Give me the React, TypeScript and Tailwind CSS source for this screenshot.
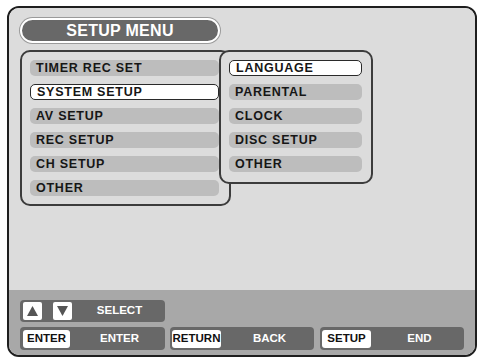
import React from "react";

const font = { fontFamily: '"Liberation Sans", Arial, Helvetica, sans-serif' };

function Item({ label, selected, w }: { label: string; selected?: boolean; w: string }) {
  return (
    <div
      className={`${w} h-[16px] rounded-[5px] flex items-center pl-[6px] text-[12.5px] font-bold tracking-[0.75px] leading-none text-[#161616] ${
        selected ? "bg-white border-[1.5px] border-[#2a2a2a] pl-[5px]" : "bg-[#bdbdbd]"
      }`}
    >
      {label}
    </div>
  );
}

function Key({ children, w }: { children: React.ReactNode; w: string }) {
  return (
    <div className={`${w} h-[18px] bg-white rounded-[3px] flex items-center justify-center text-[11.5px] font-bold text-[#111] leading-none`}>
      {children}
    </div>
  );
}

export default function App() {
  const left = ["TIMER REC SET", "SYSTEM SETUP", "AV SETUP", "REC SETUP", "CH SETUP", "OTHER"];
  const right = ["LANGUAGE", "PARENTAL", "CLOCK", "DISC SETUP", "OTHER"];
  return (
    <div className="w-[479px] h-[359px] bg-white pt-[6px] pl-[7px]" style={font}>
      <div className="w-[470px] h-[351px] border-2 border-[#1e1e1e] rounded-[12px] overflow-hidden flex flex-col">
        <div className="h-[282px] bg-[#dcdcdc] pl-[11px] pt-[10px]">
          <div className="w-[200px] h-[25px] rounded-full border-2 border-white bg-[#686868] flex items-center justify-center text-white text-[16px] font-bold tracking-[0.3px] leading-none shadow-[0_0_0_1px_#9a9a9a]">
            SETUP MENU
          </div>
          <div className="relative mt-[7px]">
            <div className="w-[211px] h-[156px] border-2 border-[#3c3c3c] rounded-[10px] pl-[8px] pt-[8px] flex flex-col gap-[8px]">
              {left.map((l, i) => (
                <Item key={l + i} label={l} selected={i === 1} w="w-[189px]" />
              ))}
            </div>
            <div className="absolute left-[199px] top-0 w-[154px] h-[134px] bg-[#dcdcdc] border-2 border-[#3c3c3c] rounded-[10px] pl-[8px] pt-[8px] flex flex-col gap-[8px]">
              {right.map((l, i) => (
                <Item key={l + i} label={l} selected={i === 0} w="w-[133px]" />
              ))}
            </div>
          </div>
        </div>
        <div className="h-[65px] bg-[#a8a8a8] pl-[11px] pt-[10px] flex flex-col gap-[5px]">
          <div className="w-[145px] h-[22px] bg-[#686868] rounded-[4px] flex items-center pl-[3px]">
            <div className="w-[19px] h-[18px] bg-white rounded-[2px] flex items-center justify-center">
              <svg width="11" height="10" viewBox="0 0 11 10">
                <polygon points="5.5,0 11,10 0,10" fill="#555" />
              </svg>
            </div>
            <div className="w-[19px] h-[18px] bg-white rounded-[2px] flex items-center justify-center ml-[11px]">
              <svg width="11" height="10" viewBox="0 0 11 10">
                <polygon points="0,0 11,0 5.5,10" fill="#555" />
              </svg>
            </div>
            <div className="flex-1 text-center text-white text-[11.5px] font-bold leading-none pl-[2px]">SELECT</div>
          </div>
          <div className="flex h-[23px]">
            <div className="w-[145px] h-[23px] bg-[#686868] rounded-[4px] flex items-center pl-[3px]">
              <Key w="w-[47px]">ENTER</Key>
              <div className="flex-1 text-center text-white text-[11.5px] font-bold leading-none pl-[4px]">ENTER</div>
            </div>
            <div className="ml-[5px] w-[144px] h-[23px] bg-[#686868] rounded-[4px] flex items-center pl-[2px]">
              <Key w="w-[49px]">RETURN</Key>
              <div className="flex-1 text-center text-white text-[11.5px] font-bold leading-none pl-[4px]">BACK</div>
            </div>
            <div className="ml-[6px] w-[144px] h-[23px] bg-[#686868] rounded-[4px] flex items-center pl-[2px]">
              <Key w="w-[49px]">SETUP</Key>
              <div className="flex-1 text-center text-white text-[11.5px] font-bold leading-none pl-[4px]">END</div>
            </div>
          </div>
        </div>
      </div>
    </div>
  );
}
